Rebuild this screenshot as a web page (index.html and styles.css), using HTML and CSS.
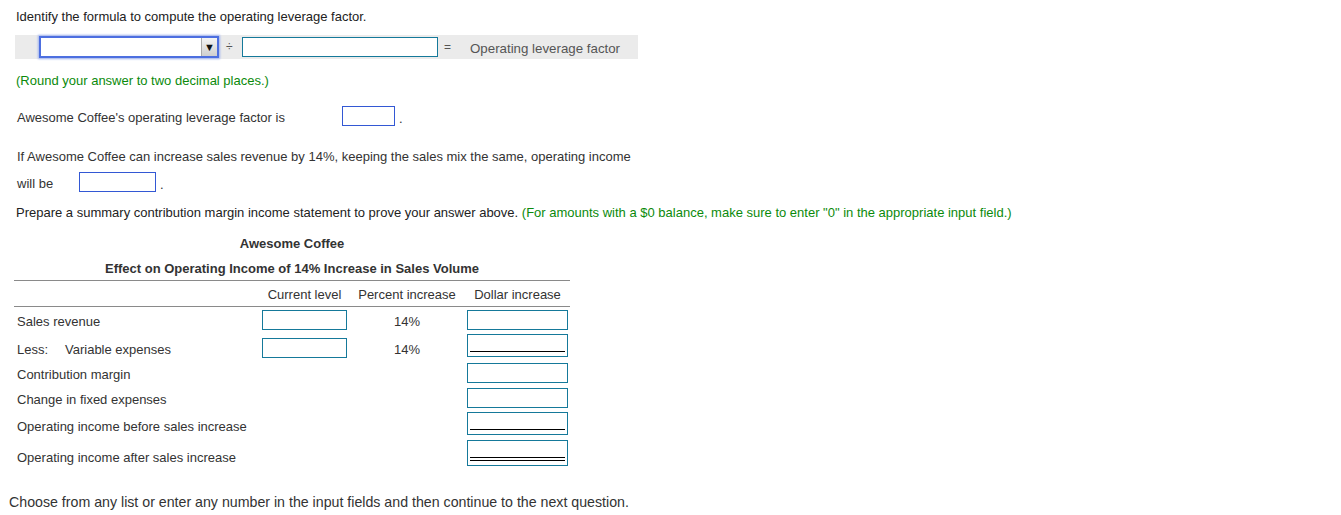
FILE: index.html
```html
<!DOCTYPE html>
<html>
<head>
<meta charset="utf-8">
<link rel="stylesheet" href="styles.css">
</head>
<body>
<div class="page">
  <div class="line heading">Identify the formula to compute the operating leverage factor.</div>
  <div class="formula">
    <div class="select"><span class="select-btn">&#9660;</span></div>
    <span class="op div">÷</span>
    <div class="formula-input"></div>
    <span class="op eq">=</span>
    <span class="formula-label">Operating leverage factor</span>
  </div>
  <div class="line green round">(Round your answer to two decimal places.)</div>
  <div class="answer-row ol">
    <span class="lbl lbl-ol">Awesome Coffee's operating leverage factor is</span>
    <div class="blue-box box-ol"></div>
    <span class="dot">.</span>
  </div>
  <div class="line para">If Awesome Coffee can increase sales revenue by 14%, keeping the sales mix the same, operating income</div>
  <div class="answer-row wb">
    <span class="lbl lbl-wb">will be</span>
    <div class="blue-box box-wb"></div>
    <span class="dot">.</span>
  </div>
  <div class="line prepare">Prepare a summary contribution margin income statement to prove your answer above. <span class="green">(For amounts with a $0 balance, make sure to enter "0" in the appropriate input field.)</span></div>

  <div class="stmt">
    <div class="title t1">Awesome Coffee</div>
    <div class="title t2">Effect on Operating Income of 14% Increase in Sales Volume</div>
    <div class="grid head">
      <span></span>
      <span class="hc">Current level</span>
      <span class="hc">Percent increase</span>
      <span class="hc">Dollar increase</span>
    </div>
    <div class="grid r r1">
      <span class="rl">Sales revenue</span>
      <div class="cbox"></div>
      <span class="pct">14%</span>
      <div class="dbox"></div>
    </div>
    <div class="grid r r2">
      <span class="rl"><span class="less">Less:</span>Variable expenses</span>
      <div class="cbox"></div>
      <span class="pct">14%</span>
      <div class="dbox tall single"></div>
    </div>
    <div class="grid r r3">
      <span class="rl">Contribution margin</span>
      <span></span><span></span>
      <div class="dbox"></div>
    </div>
    <div class="grid r r4">
      <span class="rl">Change in fixed expenses</span>
      <span></span><span></span>
      <div class="dbox"></div>
    </div>
    <div class="grid r r5">
      <span class="rl">Operating income before sales increase</span>
      <span></span><span></span>
      <div class="dbox tall single"></div>
    </div>
    <div class="grid r r6">
      <span class="rl">Operating income after sales increase</span>
      <span></span><span></span>
      <div class="dbox taller double"></div>
    </div>
  </div>
  <div class="footer">Choose from any list or enter any number in the input fields and then continue to the next question.</div>
</div>
</body>
</html>
```

FILE: styles.css
```css
html, body {
  margin: 0;
  padding: 0;
  background: #ffffff;
}
body {
  font-family: "Liberation Sans", Arial, sans-serif;
  font-size: 13px;
  color: #222222;
}
.page {
  padding: 10px 0 0 0;
}
.line {
  height: 14px;
  line-height: 14px;
  white-space: nowrap;
}
.heading {
  margin-left: 16px;
}
.green {
  color: #0b8a0b;
}

/* formula bar */
.formula {
  margin-top: 11px;
  margin-left: 15px;
  width: 623px;
  height: 24px;
  background: #ebebeb;
  display: flex;
  align-items: center;
}
.select {
  margin-left: 24px;
  width: 176px;
  height: 18px;
  border: 2px solid #4d6fe0;
  box-shadow: 0 0 2px 1px #9fb2ef;
  background: #fff;
  display: flex;
  justify-content: flex-end;
}
.select-btn {
  width: 15px;
  height: 18px;
  background: linear-gradient(#f4f4f4, #cfcfcf);
  border-left: 1px solid #aaaaaa;
  font-size: 11px;
  line-height: 18px;
  text-align: center;
  color: #111;
}
.op {
  color: #555;
  font-size: 12px;
}
.div {
  margin-left: 7px;
  width: 16px;
}
.formula-input {
  width: 194px;
  height: 18px;
  border: 1px solid #15799a;
  background: #fff;
}
.eq {
  margin-left: 6px;
  width: 26px;
}
.formula-label {
  color: #555;
  margin-top: 2px;
  font-size: 13.3px;
}

.round {
  margin-top: 15px;
  margin-left: 16px;
}

.answer-row {
  display: flex;
  align-items: center;
  height: 20px;
}
.ol {
  margin-top: 18px;
}
.lbl {
  margin-left: 17px;
  color: #333;
  margin-top: 2px;
}
.lbl-ol {
  width: 325px;
}
.lbl-wb {
  width: 62px;
}
.blue-box {
  height: 18px;
  border: 1px solid #3358d4;
  background: #fff;
}
.box-ol {
  width: 51px;
}
.box-wb {
  width: 75px;
}
.dot {
  margin-left: 4px;
  margin-top: 4px;
  color: #333;
}
.para {
  margin-top: 24px;
  margin-left: 17px;
  color: #333;
}
.wb {
  margin-top: 8px;
}
.prepare {
  margin-top: 14px;
  margin-left: 16px;
}

/* statement */
.stmt {
  margin-left: 14px;
  width: 556px;
  color: #333;
}
.title {
  font-weight: bold;
  text-align: center;
  height: 14px;
  line-height: 14px;
}
.t1 {
  margin-top: 17px;
}
.t2 {
  margin-top: 11px;
  padding-bottom: 4px;
  border-bottom: 1px solid #8a8a8a;
}
.grid {
  display: grid;
  grid-template-columns: 248px 85px 120px 101px;
  align-items: start;
}
.head {
  padding-top: 7px;
  padding-bottom: 4px;
  border-bottom: 1px solid #8a8a8a;
  line-height: 14px;
  height: 14px;
}
.hc {
  text-align: center;
  white-space: nowrap;
}
.r {
  line-height: 14px;
}
.rl {
  padding-left: 3px;
  white-space: nowrap;
}
.less {
  display: inline-block;
  width: 48px;
}
.pct {
  text-align: center;
}
.cbox, .dbox {
  box-sizing: border-box;
  height: 20px;
  border: 1px solid #15799a;
  background: #fff;
  position: relative;
}
.dbox.tall {
  height: 23px;
}
.dbox.taller {
  height: 26px;
}
.dbox.single::after {
  content: "";
  position: absolute;
  left: 2px;
  right: 2px;
  bottom: 4px;
  border-bottom: 1px solid #000;
}
.dbox.double::after {
  content: "";
  position: absolute;
  left: 2px;
  right: 2px;
  bottom: 4px;
  height: 2px;
  border-top: 1px solid #000;
  border-bottom: 1px solid #000;
}

.r1 { height: 27px; }
.r1 .rl, .r1 .pct { margin-top: 8px; }
.r1 .cbox, .r1 .dbox { margin-top: 3px; }

.r2 { height: 27px; }
.r2 .rl, .r2 .pct { margin-top: 9px; }
.r2 .cbox { margin-top: 4px; }
.r2 .dbox { margin-top: 0; }

.r3 { height: 25px; }
.r3 .rl { margin-top: 7px; }
.r3 .dbox { margin-top: 2px; }

.r4 { height: 24px; }
.r4 .rl { margin-top: 7px; }
.r4 .dbox { margin-top: 2px; }

.r5 { height: 28px; }
.r5 .rl { margin-top: 10px; }
.r5 .dbox { margin-top: 2px; }

.r6 { height: 28px; }
.r6 .rl { margin-top: 13px; }
.r6 .dbox { margin-top: 2px; }

.footer {
  margin-top: 28px;
  margin-left: 9px;
  font-size: 14.2px;
  line-height: 16px;
  height: 16px;
  color: #333;
  white-space: nowrap;
}
```
